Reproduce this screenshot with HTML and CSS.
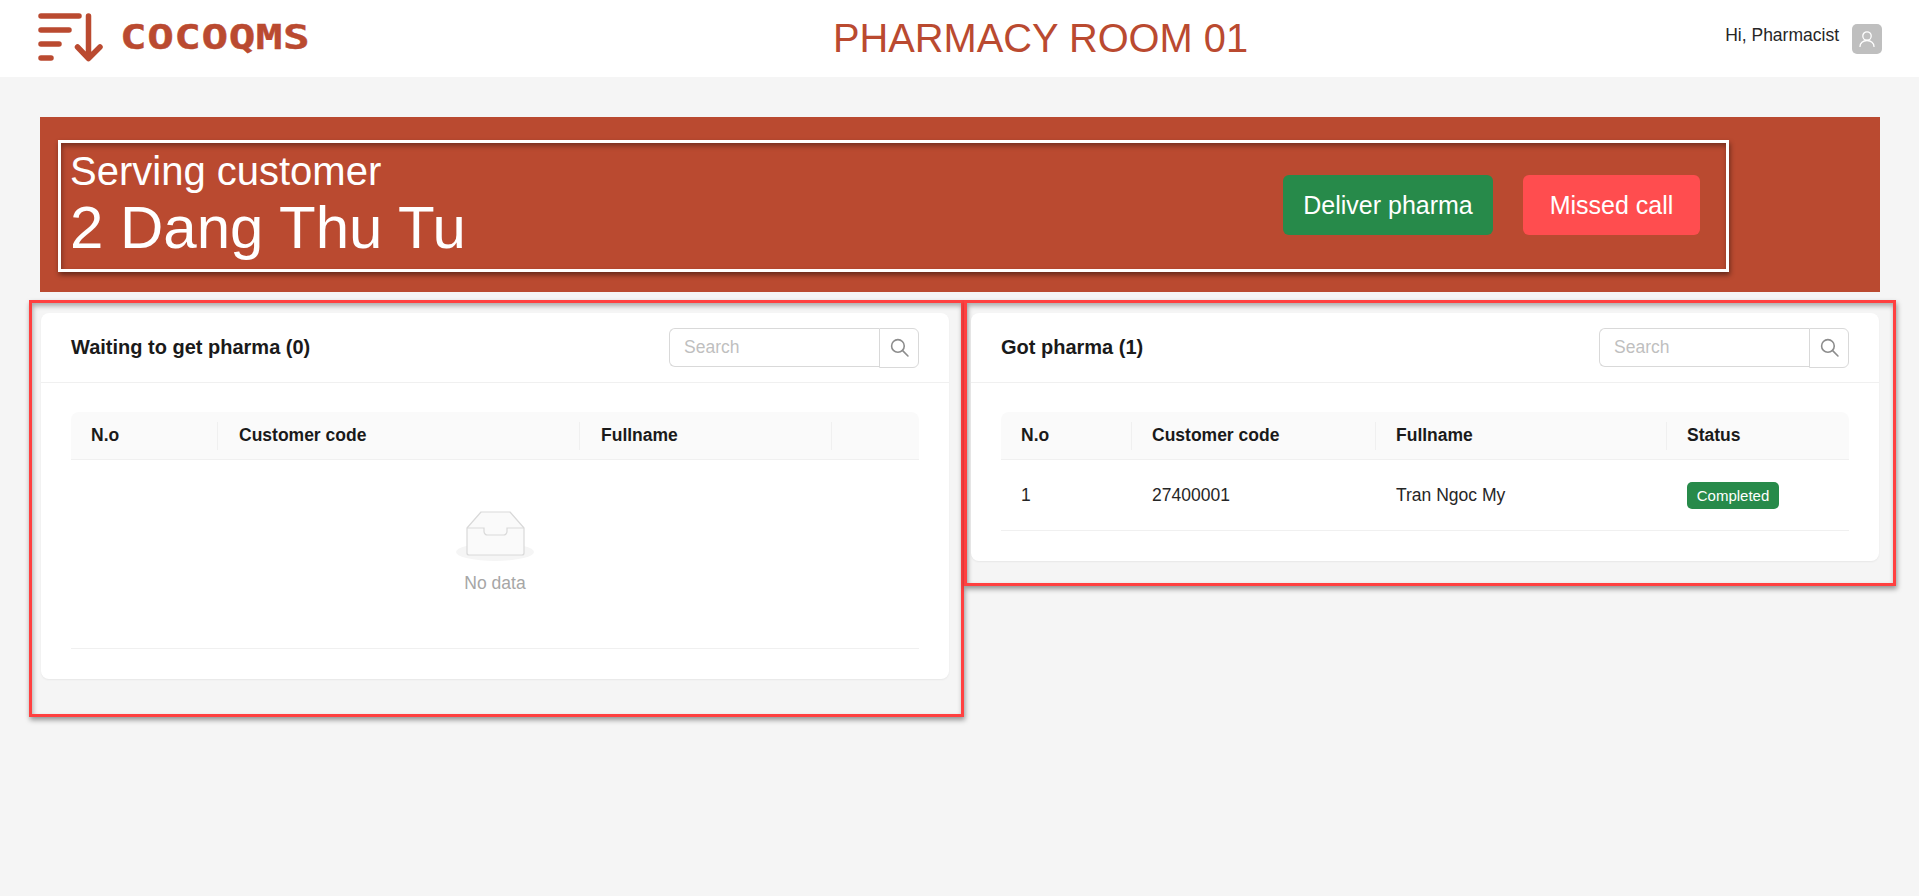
FILE: index.html
```html
<!DOCTYPE html>
<html lang="en">
<head>
<meta charset="utf-8">
<title>Pharmacy Room 01</title>
<link rel="stylesheet" href="styles.css">
</head>
<body>
<header class="topbar">
  <div class="brand">
    <svg class="brand-mark" width="66" height="50" viewBox="0 0 66 50" fill="none" stroke="#ba4a30" stroke-width="5.5" stroke-linecap="round" stroke-linejoin="round">
      <path d="M3 3H41M3 17H31M3 31H21M3 45H13"/>
      <path d="M50.500 3V45M39.500 34L50.500 45.500L62 34"/>
    </svg>
    <span class="brand-name">COCOQMS</span>
  </div>
  <h1 class="room-title">PHARMACY ROOM 01</h1>
  <div class="user">
    <span class="user-name">Hi, Pharmacist</span>
    <span class="avatar">
      <svg width="16" height="16" viewBox="0 0 16 16" fill="none" stroke="#fff" stroke-width="1.300" stroke-linecap="round">
        <circle cx="8" cy="5" r="4.200"/>
        <path d="M1 15.500C1 12 4 9.500 8 9.500S15 12 15 15.500"/>
      </svg>
    </span>
  </div>
</header>

<main class="page">
  <section class="banner">
    <div class="serving">
      <div class="serving-text">
        <div class="serving-label">Serving customer</div>
        <div class="serving-name">2 Dang Thu Tu</div>
      </div>
      <div class="serving-actions">
        <button class="action action-deliver" type="button">Deliver pharma</button>
        <button class="action action-missed" type="button">Missed call</button>
      </div>
    </div>
  </section>

  <div class="panels">
    <section class="panel panel-waiting">
      <div class="card">
        <div class="card-head">
          <h2 class="card-title">Waiting to get pharma (0)</h2>
          <div class="search">
            <input class="search-input" type="text" placeholder="Search">
            <button class="search-btn" type="button" aria-label="Search">
              <svg width="19" height="19" viewBox="0 0 18 18" fill="none" stroke="#8c8c8c" stroke-width="1.500" stroke-linecap="round"><circle cx="7.500" cy="7.500" r="6"/><path d="M12 12L17 17"/></svg>
            </button>
          </div>
        </div>
        <div class="card-body">
          <table class="grid grid-waiting">
            <thead>
              <tr><th>N.o</th><th>Customer code</th><th>Fullname</th><th></th></tr>
            </thead>
            <tbody>
              <tr>
                <td class="empty" colspan="4">
                  <svg class="empty-icon" width="78" height="50" viewBox="0 0 78 50">
                    <ellipse cx="39" cy="41" rx="39" ry="9" fill="#f5f5f5"/>
                    <path d="M11 17L25 1H54L68 17V42A2 2 0 0 1 66 44H13A2 2 0 0 1 11 42Z" fill="#fafafa" stroke="#d9d9d9" stroke-width="1.200" stroke-linejoin="round"/>
                    <path d="M11 17H28V20.500A3.500 3.500 0 0 0 31.500 24H47.500A3.500 3.500 0 0 0 51 20.500V17H68" fill="none" stroke="#d9d9d9" stroke-width="1.200"/>
                  </svg>
                  <div class="empty-text">No data</div>
                </td>
              </tr>
            </tbody>
          </table>
        </div>
      </div>
    </section>

    <section class="panel panel-done">
      <div class="card">
        <div class="card-head">
          <h2 class="card-title">Got pharma (1)</h2>
          <div class="search">
            <input class="search-input" type="text" placeholder="Search">
            <button class="search-btn" type="button" aria-label="Search">
              <svg width="19" height="19" viewBox="0 0 18 18" fill="none" stroke="#8c8c8c" stroke-width="1.500" stroke-linecap="round"><circle cx="7.500" cy="7.500" r="6"/><path d="M12 12L17 17"/></svg>
            </button>
          </div>
        </div>
        <div class="card-body">
          <table class="grid grid-done">
            <thead>
              <tr><th>N.o</th><th>Customer code</th><th>Fullname</th><th>Status</th></tr>
            </thead>
            <tbody>
              <tr>
                <td>1</td><td>27400001</td><td>Tran Ngoc My</td>
                <td><span class="badge">Completed</span></td>
              </tr>
            </tbody>
          </table>
        </div>
      </div>
    </section>
  </div>
</main>
</body>
</html>
```

FILE: styles.css
```css
* { box-sizing: border-box; }

html, body { margin: 0; padding: 0; }

body {
  min-height: 896px;
  background: #f5f5f5;
  color: #262626;
  font-family: "Liberation Sans", Arial, sans-serif;
  font-size: 17.5px;
  overflow: hidden;
}

.topbar {
  display: flex;
  align-items: center;
  height: 77px;
  background: #fff;
}

.brand {
  display: flex;
  align-items: flex-start;
  width: 833px;
  height: 77px;
  padding: 13px 0 0 38px;
}

.brand-name {
  margin: 9px 0 0 16px;
  color: #ba4a30;
  font-family: "DejaVu Sans Mono", monospace;
  font-size: 33px;
  font-weight: 700;
  line-height: 32px;
  letter-spacing: 0.400px;
  -webkit-text-stroke: 0.4px #ba4a30;
  transform: scaleX(1.340);
  transform-origin: left center;
}

.room-title {
  margin: 0;
  color: #ba4a30;
  font-size: 39.8px;
  font-weight: 400;
  line-height: 75px;
  white-space: nowrap;
}

.user {
  display: flex;
  align-items: center;
  margin-left: auto;
  margin-right: 37px;
}

.user-name { margin-right: 13px; position: relative; top: -3px; }

.avatar {
  display: flex;
  align-items: center;
  justify-content: center;
  width: 30px;
  height: 30px;
  border-radius: 5px;
  background: #bfbfbf;
}

.page { padding: 40px 0 0; }

.banner {
  height: 175px;
  margin: 0 39px 0 40px;
  padding: 23px 0 0 18px;
  background: #ba4a30;
}

.serving {
  display: flex;
  align-items: center;
  justify-content: space-between;
  width: 1671px;
  height: 132px;
  padding: 0 26px 0 9px;
  border: 3px solid #fff;
  box-shadow: 1px 3px 5px rgba(0, 0, 0, .45), inset 1px 3px 5px rgba(0, 0, 0, .35);
  color: #fff;
}

.serving-text { margin-top: -2px; }

.serving-label { font-size: 40px; line-height: 46px; }

.serving-name { font-size: 60px; line-height: 68px; }

.serving-actions { display: flex; gap: 30px; margin-top: -2px; }

.action {
  height: 60px;
  border: 0;
  border-radius: 6px;
  color: #fff;
  font-family: inherit;
  font-size: 25px;
}

.action-deliver { width: 210px; background: #278a4a; }

.action-missed { width: 177px; background: #ff4d4f; }

.panels {
  display: flex;
  align-items: flex-start;
  margin-top: 8px;
  padding-left: 29px;
}

.panel {
  border: 3px solid #ff4040;
  box-shadow: 1px 3px 5px rgba(0, 0, 0, .4), inset 1px 3px 5px rgba(0, 0, 0, .3);
}

.panel-waiting {
  width: 935px;
  padding: 10px 12px 35px 9px;
}

.panel-done {
  width: 932px;
  padding: 10px 14px 22px 4px;
}

.card {
  border-radius: 8px;
  background: #fff;
  box-shadow: 0 1px 2px rgba(0, 0, 0, .06);
}

.card-head {
  display: flex;
  align-items: center;
  justify-content: space-between;
  height: 70px;
  padding: 0 30px;
  border-bottom: 1px solid #f0f0f0;
}

.card-title {
  margin: 0;
  color: #1a1a1a;
  font-size: 20px;
  font-weight: 700;
}

.search { display: flex; width: 250px; height: 40px; }

.search-input {
  flex: 1;
  min-width: 0;
  height: 39px;
  padding: 0 14px;
  border: 1px solid #d9d9d9;
  border-right: 0;
  border-radius: 6px 0 0 6px;
  color: #262626;
  font-family: inherit;
  font-size: 17.5px;
  outline: none;
}

.search-input::placeholder { color: #bfbfbf; }

.search-btn {
  display: flex;
  align-items: center;
  justify-content: center;
  width: 40px;
  height: 40px;
  padding: 0;
  border: 1px solid #d9d9d9;
  border-radius: 0 6px 6px 0;
  background: #fff;
}

.card-body { padding: 29px 30px 30px; }

.grid {
  width: 848px;
  border-collapse: separate;
  border-spacing: 0;
  table-layout: fixed;
}

.grid th {
  position: relative;
  height: 48px;
  padding: 0 20px;
  border-bottom: 1px solid #f0f0f0;
  background: #fafafa;
  color: #1a1a1a;
  font-size: 17.5px;
  font-weight: 700;
  text-align: left;
}

.grid th:first-child { border-top-left-radius: 8px; }

.grid th:last-child { border-top-right-radius: 8px; }

.grid th:not(:last-child)::after {
  content: "";
  position: absolute;
  top: 10px;
  right: 0;
  width: 1px;
  height: 28px;
  background: #f0f0f0;
}

.grid td {
  height: 71px;
  padding: 0 20px;
  border-bottom: 1px solid #f0f0f0;
  color: #262626;
}

.grid-waiting th:nth-child(1) { width: 147px; }
.grid-waiting th:nth-child(2) { width: 362px; padding-left: 21px; }
.grid-waiting th:nth-child(3) { width: 252px; padding-left: 21px; }

.grid-done th:nth-child(1) { width: 131px; }
.grid-done th:nth-child(2) { width: 244px; }
.grid-done th:nth-child(3) { width: 291px; }

.grid td.empty {
  height: 189px;
  padding: 0 0 4px;
  text-align: center;
}

.empty-icon { display: block; margin: 0 auto; }

.empty-text {
  margin-top: 12px;
  color: #a6a6a6;
  font-size: 17.5px;
  line-height: 20px;
}

.badge {
  display: inline-block;
  width: 92px;
  height: 27px;
  border-radius: 5px;
  background: #278a4a;
  color: #fff;
  font-size: 15px;
  line-height: 27px;
  text-align: center;
}
```
